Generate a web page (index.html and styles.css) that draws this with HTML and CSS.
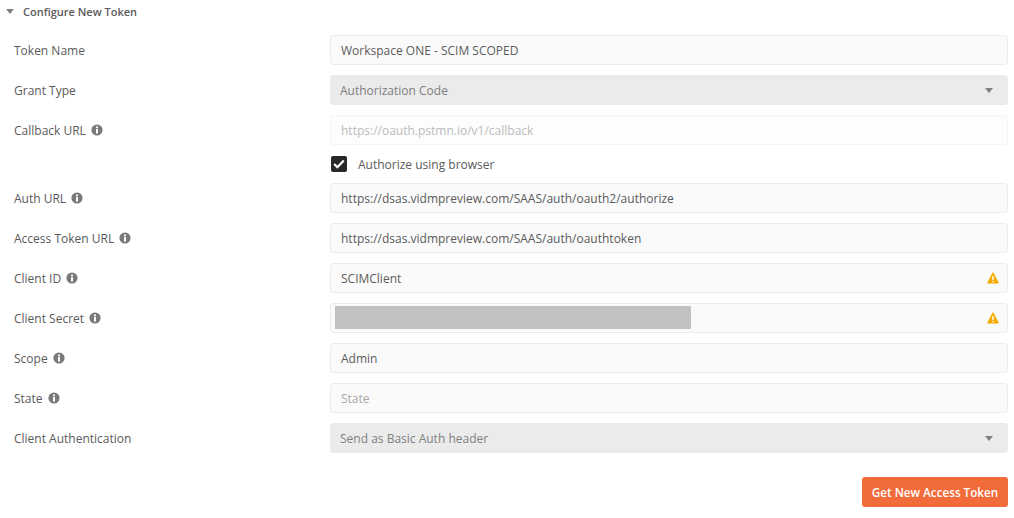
FILE: index.html
```html
<!DOCTYPE html>
<html lang="en">

<head>
    <meta charset="UTF-8">
    <meta name="viewport" content="width=device-width, initial-scale=1.0">
    <title>Configure New Token</title>
    <link rel="stylesheet" href="styles.css">
</head>

<body>
    <svg class="icon-defs" width="0" height="0" aria-hidden="true">
        <symbol id="info" viewBox="0 0 12 12">
            <circle cx="6" cy="6" r="5.6" fill="#7a7a7a"/>
            <rect x="5" y="5" width="2" height="4.5" fill="#fff"/>
            <rect x="5" y="2.5" width="2" height="1.7" fill="#fff"/>
        </symbol>
        <symbol id="warn" viewBox="0 0 12 12">
            <path d="M6 1 11.2 11H.8Z" fill="#f5ab00" stroke="#f5ab00" stroke-width="1.2" stroke-linejoin="round"/>
            <rect x="5.3" y="4" width="1.4" height="4" fill="#fff"/>
            <rect x="5.3" y="8.8" width="1.4" height="1.4" fill="#fff"/>
        </symbol>
    </svg>

    <div class="token-panel">
        <div class="panel-title">
            <span class="caret caret-small"></span>
            <span>Configure New Token</span>
        </div>

        <div class="form-rows">
            <div class="form-row">
                <div class="row-label">Token Name</div>
                <div class="field">Workspace ONE - SCIM SCOPED</div>
            </div>
            <div class="form-row">
                <div class="row-label">Grant Type</div>
                <div class="field field-select">
                    <span>Authorization Code</span>
                    <span class="caret"></span>
                </div>
            </div>
            <div class="form-row">
                <div class="row-label">Callback URL <svg class="info-icon"><use href="#info"/></svg></div>
                <div class="field field-disabled">https://oauth.pstmn.io/v1/callback</div>
            </div>
            <div class="form-row check-row">
                <div></div>
                <label class="check-label">
                    <span class="checkbox">
                        <svg width="12" height="10" viewBox="0 0 12 10"><path d="M1.2 5 4.4 8.2 10.8 1.6" fill="none" stroke="#fff" stroke-width="2.2"/></svg>
                    </span>
                    Authorize using browser
                </label>
            </div>
            <div class="form-row">
                <div class="row-label">Auth URL <svg class="info-icon"><use href="#info"/></svg></div>
                <div class="field">https://dsas.vidmpreview.com/SAAS/auth/oauth2/authorize</div>
            </div>
            <div class="form-row">
                <div class="row-label">Access Token URL <svg class="info-icon"><use href="#info"/></svg></div>
                <div class="field">https://dsas.vidmpreview.com/SAAS/auth/oauthtoken</div>
            </div>
            <div class="form-row">
                <div class="row-label">Client ID <svg class="info-icon"><use href="#info"/></svg></div>
                <div class="field field-warn">
                    <span>SCIMClient</span>
                    <svg class="warn-icon"><use href="#warn"/></svg>
                </div>
            </div>
            <div class="form-row">
                <div class="row-label">Client Secret <svg class="info-icon"><use href="#info"/></svg></div>
                <div class="field field-warn field-secret">
                    <span class="redacted"></span>
                    <svg class="warn-icon"><use href="#warn"/></svg>
                </div>
            </div>
            <div class="form-row">
                <div class="row-label">Scope <svg class="info-icon"><use href="#info"/></svg></div>
                <div class="field">Admin</div>
            </div>
            <div class="form-row">
                <div class="row-label">State <svg class="info-icon"><use href="#info"/></svg></div>
                <div class="field field-placeholder">State</div>
            </div>
            <div class="form-row">
                <div class="row-label">Client Authentication</div>
                <div class="field field-select">
                    <span>Send as Basic Auth header</span>
                    <span class="caret"></span>
                </div>
            </div>
        </div>

        <div class="actions">
            <button type="button" class="btn-token">Get New Access Token</button>
        </div>
    </div>
</body>

</html>
```

FILE: styles.css
```css
* {
    box-sizing: border-box;
}

body {
    margin: 0;
    background: #fff;
    font-family: 'Open Sans', sans-serif;
    font-size: 12px;
    color: #5a5a5a;
}

.icon-defs {
    position: absolute;
}

.token-panel {
    padding: 0 6px 0 6px;
}

.panel-title {
    display: flex;
    align-items: center;
    gap: 9px;
    height: 24px;
    padding-bottom: 2px;
    font-weight: 600;
    font-size: 11px;
}

.caret {
    width: 0;
    height: 0;
    border-left: 4px solid transparent;
    border-right: 4px solid transparent;
    border-top: 5px solid #808080;
}

.form-rows {
    display: flex;
    flex-direction: column;
    gap: 10px;
    margin-top: 11px;
}

.form-row {
    display: grid;
    grid-template-columns: 324px 1fr;
    align-items: center;
    min-height: 30px;
}

.row-label {
    display: flex;
    align-items: center;
    gap: 5px;
    padding-left: 8px;
}

.info-icon {
    width: 12px;
    height: 12px;
}

.field {
    display: flex;
    align-items: center;
    justify-content: space-between;
    height: 30px;
    padding: 0 10px;
    background: #fafafa;
    border: 1px solid #ececec;
    border-radius: 3px;
}

.field-select {
    padding-left: 9px;
    padding-right: 14px;
    background: #ebebeb;
    border-color: #ebebeb;
    color: #808080;
}

.field-disabled {
    background: #fdfdfd;
    border-color: #f5f5f5;
    color: #bbb;
}

.field-placeholder {
    color: #a6a6a6;
}

.field-warn {
    padding-right: 8px;
}

.field-secret {
    padding-left: 4px;
}

.redacted {
    width: 356px;
    height: 23px;
    margin-bottom: 2px;
    background: #c1c1c1;
}

.warn-icon {
    width: 12px;
    height: 12px;
}

.check-row {
    min-height: 24px;
    margin-top: -3px;
    margin-bottom: -3px;
}

.check-label {
    display: flex;
    align-items: center;
    gap: 11px;
    padding-left: 1px;
}

.checkbox {
    display: flex;
    align-items: center;
    justify-content: center;
    width: 16px;
    height: 16px;
    background: #282828;
    border-radius: 2px;
}

.actions {
    display: flex;
    justify-content: flex-end;
    margin-top: 24px;
}

.btn-token {
    width: 146px;
    height: 30px;
    padding: 0;
    background: #f26b3a;
    color: #fff;
    border: none;
    border-radius: 3px;
    font-family: inherit;
    font-size: 11.7px;
    font-weight: 600;
}
```
